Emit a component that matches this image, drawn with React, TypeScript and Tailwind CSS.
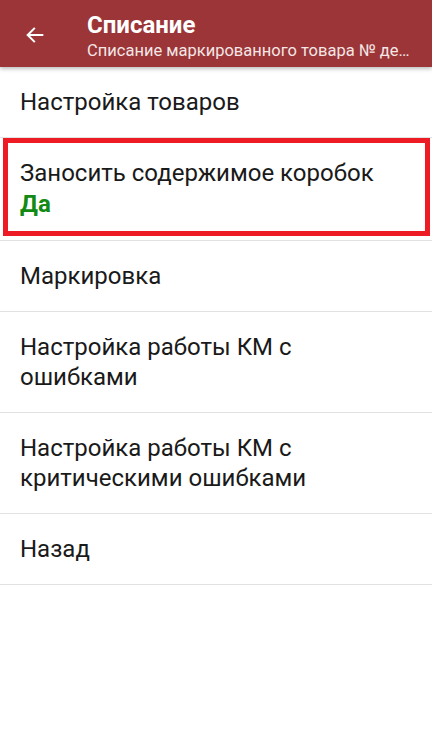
export default function App() {
  const rows = [
    "Настройка товаров",
    null,
    "Маркировка",
    "Настройка работы КМ с ошибками",
    "Настройка работы КМ с критическими ошибками",
    "Назад",
  ];

  return (
    <div
      className="w-[432px] h-[740px] bg-white overflow-hidden"
      style={{ fontFamily: "Roboto, 'Noto Sans', sans-serif" }}
    >
      <header className="relative z-10 h-[67px] bg-[#9b3537] flex items-center shadow-[0_2px_4px_rgba(0,0,0,0.25)]">
        <div className="w-[87px] flex justify-center pr-[18px] pt-[2px]">
          <svg width="22" height="22" viewBox="0 0 24 24" fill="none">
            <path
              d="M20 12H4.5M11 5l-7 7 7 7"
              stroke="white"
              strokeWidth="2.2"
              strokeLinecap="square"
            />
          </svg>
        </div>
        <div className="flex-1 min-w-0 pr-3 pt-[6px] text-white">
          <div className="text-[24px] font-bold leading-[28px]">Списание</div>
          <div className="text-[16.5px] leading-[24px] truncate text-[#f3e6e6]">
            Списание маркированного товара № де…
          </div>
        </div>
      </header>

      <div className="flex flex-col">
        {rows.map((r, i) =>
          r === null ? (
            <div key={i} className="relative border-b border-[#e2e2e2] px-5 py-5">
              <div className="text-[24px] leading-[31px] text-[#1a1a1a]">
                Заносить содержимое коробок
              </div>
              <div className="text-[24px] leading-[31px] font-bold text-[#138a13]">Да</div>
              <div className="absolute top-0 left-[3px] right-[2px] bottom-[4px] border-[5px] border-[#ed1c24]" />
            </div>
          ) : (
            <div
              key={i}
              className="border-b border-[#e2e2e2] px-5 py-5 text-[24px] leading-[30px] text-[#1a1a1a] pr-[110px]"
            >
              {r}
            </div>
          )
        )}
      </div>
    </div>
  );
}
